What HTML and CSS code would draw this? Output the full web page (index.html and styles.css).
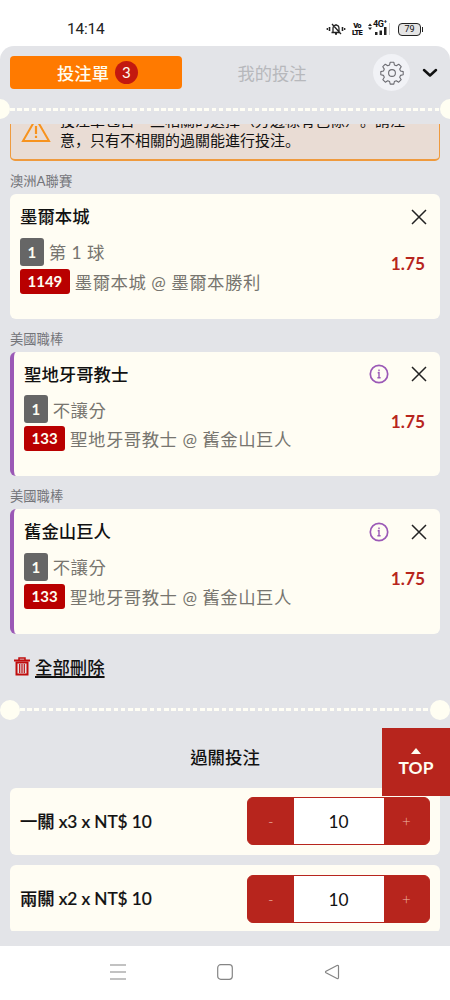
FILE: index.html
```html
<!DOCTYPE html>
<html lang="zh-Hant">
<head>
<meta charset="utf-8">
<meta name="viewport" content="width=device-width, initial-scale=1">
<title>投注單</title>
<link rel="stylesheet" href="styles.css">
</head>
<body>
<div class="phone">
  <div class="status">
    <span class="clock">14:14</span>
    <div class="status-icons">
      <svg class="bell" width="20" height="14" viewBox="0 0 20 14" fill="none" stroke="#222" stroke-width="1.3"><path d="M5.5 10.5h9M7 10V6.5a3 3.3 0 0 1 6 0V10M10 2v1M9 12h2M6 2l9 10"/><path d="M3.5 5v4M16.5 5v4" stroke-width="1.6"/><path d="M1.3 6v2M18.7 6v2"/></svg>
      <span class="volte"><span>Vo</span><span>LTE</span></span>
      <span class="signal">
        <span class="net">4G<sup>+</sup></span>
        <svg width="24" height="14" viewBox="0 0 24 14"><path d="M1 4l2-2.6L5 4zM1 5.4h4L3 8z" fill="#222"/><path d="M8 10h2.500v3H8zM12.500 8.500H15V13h-2.500zM17 5h2.500v8H17z" fill="#222"/><path d="M22 1h1v12h-1z" fill="#ccc"/></svg>
      </span>
      <span class="battery">79</span>
    </div>
  </div>

  <div class="sheet">
    <div class="tabs">
      <div class="tab active">投注單<span class="count">3</span></div>
      <div class="tab">我的投注</div>
      <div class="gear">
        <svg width="24" height="24" viewBox="0 0 24 24" fill="none" stroke="#6c6c72" stroke-width="1.1" stroke-linejoin="round"><path d="M10.200 1.200h3.600l.6 2.700 1.900.8 2.400-1.500 2.500 2.500-1.500 2.400.8 1.900 2.700.6v3.200l-2.700.6-.8 1.900 1.500 2.400-2.500 2.500-2.400-1.500-1.900.8-.6 2.600h-3.600l-.6-2.600-1.900-.8-2.400 1.500-2.500-2.500 1.500-2.400-.8-1.900-2.700-.6v-3.200l2.700-.6.8-1.900-1.500-2.400 2.500-2.500 2.400 1.500 1.900-.8z"/><circle cx="12" cy="12" r="3.400"/></svg>
      </div>
      <svg class="chevron" width="16" height="10" viewBox="0 0 16 10" fill="none" stroke="#111" stroke-width="2.500" stroke-linecap="round" stroke-linejoin="round"><path d="M2 2l6 5.500L14 2"/></svg>
    </div>
    <div class="perforation edge"><i></i><b></b><i></i></div>

    <div class="content">
      <div class="notice-clip">
        <div class="notice">
          <svg width="30" height="27" viewBox="0 0 30 27" fill="none" stroke="#f7931e" stroke-width="2"><path d="M15 2.500L28 25H2z"/><path d="M15 10v8M15 19.800v2.200" stroke-width="2.200"/></svg>
          <p lang="zh-Hans">投注單包含一些相關的選擇（旁邊標有色條）。請注意，只有不相關的過關能進行投注。</p>
        </div>
      </div>

      <div class="league">澳洲A聯賽</div>
      <div class="card">
        <div class="head"><h3>墨爾本城</h3>
          <svg class="close" width="16" height="16" viewBox="0 0 16 16"><path d="M1 1l14 14M15 1L1 15"/></svg></div>
        <div class="body">
          <div class="lines">
            <div class="line"><span class="tag gray">1</span><span>第 1 球</span></div>
            <div class="line"><span class="tag red">1149</span><span>墨爾本城 @ 墨爾本勝利</span></div>
          </div>
          <span class="odds">1.75</span>
        </div>
      </div>

      <div class="league">美國職棒</div>
      <div class="card linked">
        <div class="head"><h3>聖地牙哥教士</h3>
          <svg class="info" width="20" height="20" viewBox="0 0 20 20"><circle cx="10" cy="10" r="8.700"/><path d="M8.700 8.800H10v4.600M8.400 13.700h3.200M10 5.500v1.800" stroke-width="1.400"/></svg>
          <svg class="close" width="16" height="16" viewBox="0 0 16 16"><path d="M1 1l14 14M15 1L1 15"/></svg></div>
        <div class="body">
          <div class="lines">
            <div class="line"><span class="tag gray">1</span><span>不讓分</span></div>
            <div class="line"><span class="tag red">133</span><span>聖地牙哥教士 @ 舊金山巨人</span></div>
          </div>
          <span class="odds">1.75</span>
        </div>
      </div>

      <div class="league">美國職棒</div>
      <div class="card linked">
        <div class="head"><h3>舊金山巨人</h3>
          <svg class="info" width="20" height="20" viewBox="0 0 20 20"><circle cx="10" cy="10" r="8.700"/><path d="M8.700 8.800H10v4.600M8.400 13.700h3.200M10 5.500v1.800" stroke-width="1.400"/></svg>
          <svg class="close" width="16" height="16" viewBox="0 0 16 16"><path d="M1 1l14 14M15 1L1 15"/></svg></div>
        <div class="body">
          <div class="lines">
            <div class="line"><span class="tag gray">1</span><span>不讓分</span></div>
            <div class="line"><span class="tag red">133</span><span>聖地牙哥教士 @ 舊金山巨人</span></div>
          </div>
          <span class="odds">1.75</span>
        </div>
      </div>

      <div class="clear-all">
        <svg width="16" height="19" viewBox="0 0 16 19" fill="none" stroke="#c00d0d"><path d="M0 3.500h16" stroke-width="2"/><path d="M5 3V1h6v2" stroke-width="1.500"/><path d="M2.500 5.500v12h11v-12z" stroke-width="2"/><path d="M5.700 7v9M8 7v9M10.300 7v9" stroke-width="1.200"/></svg>
        <span>全部刪除</span>
      </div>

      <div class="perforation inset"><i></i><b></b><i></i></div>

      <h2>過關投注</h2>
      <div class="stake">
        <span>一關 x3 x NT$ 10</span>
        <div class="stepper"><span>-</span><strong>10</strong><span>+</span></div>
      </div>
      <div class="stake">
        <span>兩關 x2 x NT$ 10</span>
        <div class="stepper"><span>-</span><strong>10</strong><span>+</span></div>
      </div>
    </div>
    <div class="top-button">
      <svg width="10" height="6" viewBox="0 0 10 6"><path d="M5 0l5 6H0z" fill="#fffef2"/></svg>
      <span>TOP</span>
    </div>
  </div>

  <div class="nav">
    <svg width="16" height="16" viewBox="0 0 16 16"><path d="M0 1h16M0 8h16M0 15h16"/></svg>
    <svg width="16" height="16" viewBox="0 0 16 16"><rect x=".7" y=".7" width="14.600" height="14.600" rx="3"/></svg>
    <svg width="16" height="16" viewBox="0 0 16 16"><path d="M13 1.500L2 7.200q-1 .8 0 1.600L13 14.500q1.500.4 1.500-1V2.500q0-1.500-1.500-1z"/></svg>
  </div>
</div>
</body>
</html>
```
FILE: styles.css
```css
* { box-sizing: border-box; }
body {
  margin: 0;
  background: #fff;
  color: #111;
  font-family: Lato, "Noto Sans CJK TC", sans-serif;
}
h2, h3, p { margin: 0; }
svg { display: block; flex: none; }

.phone {
  display: flex;
  flex-direction: column;
  width: 450px;
  height: 1000px;
  overflow: hidden;
}

/* status bar */
.status {
  display: flex;
  justify-content: space-between;
  height: 46px;
  padding: 18px 29px 0 67px;
}
.clock {
  font: 15.5px/22px Roboto, sans-serif;
  letter-spacing: -.2px;
  color: #222;
}
.status-icons {
  display: flex;
  align-items: center;
  height: 22px;
  font-family: Roboto, sans-serif;
}
.bell { margin-right: 6px; }
.volte {
  display: flex;
  flex-direction: column;
  align-items: center;
  width: 10px;
  font-size: 7.5px;
  font-weight: 900;
  line-height: 7px;
  letter-spacing: -.7px;
}
.signal { position: relative; margin: 0 7px 0 5px; }
.net {
  position: absolute;
  left: 6px;
  top: -2px;
  font-size: 9px;
  font-weight: 700;
  line-height: 9px;
  letter-spacing: -.3px;
}
.net sup { font-size: 6px; line-height: 0; }
.battery {
  position: relative;
  width: 23px;
  height: 13px;
  border: 1.5px solid #222;
  border-radius: 4px;
  background: #e4e4e4;
  font-size: 9px;
  line-height: 11px;
  text-align: center;
}
.battery::after {
  content: "";
  position: absolute;
  right: -3px;
  top: 3px;
  width: 1.5px;
  height: 5px;
  background: #222;
}

/* slip sheet */
.sheet {
  position: relative;
  height: 900px;
  border-radius: 14px 14px 0 0;
  background: #e3e4e8;
  overflow: hidden;
}
.tabs {
  display: flex;
  align-items: center;
  height: 53px;
  padding: 0 11px 0 10px;
}
.tab {
  display: flex;
  align-items: center;
  justify-content: center;
  width: 180px;
  height: 33px;
  padding-bottom: 1px;
  font-size: 17.3px;
  color: #b7b8bc;
}
.tab.active {
  width: 172px;
  padding-left: 3px;
  border-radius: 4px;
  background: #ff7a00;
  color: #fffdf0;
  font-weight: 500;
}
.count {
  width: 23px;
  height: 23px;
  margin-left: 6px;
  border-radius: 50%;
  background: #c3190f;
  font: 15px/23px Lato, sans-serif;
  text-align: center;
}
.gear {
  display: flex;
  align-items: center;
  justify-content: center;
  width: 37px;
  height: 37px;
  margin: 0 12px 0 11px;
  border-radius: 50%;
  background: #f1f2f6;
}
.perforation {
  display: flex;
  align-items: center;
  justify-content: space-between;
  height: 20px;
}
.perforation i {
  width: 20px;
  height: 20px;
  border-radius: 50%;
  background: #fffef2;
}
.perforation b {
  flex: 1;
  height: 3px;
  background: repeating-linear-gradient(90deg, #fffef5 0 4.6px, transparent 4.6px 7.2px);
}
.edge { margin: 0 -10px; }

.content {
  height: 807px;
  margin-top: 5px;
  overflow: hidden;
}
.notice-clip {
  display: flex;
  align-items: flex-end;
  height: 37px;
  padding: 0 10px;
  overflow: hidden;
}
.notice {
  display: flex;
  flex: none;
  width: 430px;
  height: 60px;
  padding: 8px 10px 0 10px;
  border: 1.5px solid #ef9a3d;
  border-bottom-width: 2px;
  border-radius: 5px;
  background: #e9dcd4;
}
.notice p {
  width: 352px;
  margin-left: 9px;
  font-family: "Noto Sans CJK SC", sans-serif;
  font-size: 15px;
  line-height: 20px;
  text-spacing-trim: space-all;
}
.notice svg { margin-top: 6px; }
.league {
  height: 33px;
  padding: 10px 10px 0;
  font-size: 13.3px;
  line-height: 20px;
  color: #74757a;
}
.card {
  height: 124.5px;
  margin: 0 10px;
  padding: 10px 13px 0 10px;
  border-radius: 6px;
  background: #fffdf3;
}
.linked { border-left: 4px solid #9b59b6; }
.head {
  display: flex;
  align-items: center;
  height: 25px;
}
.head h3 {
  flex: 1;
  font-size: 17.4px;
  line-height: 25px;
  font-weight: 500;
}
.close {
  margin-left: 22px;
  fill: none;
  stroke: #222;
  stroke-width: 1.5;
}
.info {
  fill: none;
  stroke: #9b59b6;
  stroke-width: 1.7;
}
.body {
  display: flex;
  align-items: center;
  justify-content: space-between;
  height: 69px;
  padding-right: 2px;
}
.lines { padding-top: 6px; }
.line {
  display: flex;
  align-items: center;
  height: 29.5px;
  font-size: 17.4px;
  letter-spacing: .5px;
  color: #77756f;
}
.tag {
  margin-right: 5px;
  padding: 0 7.5px;
  border-radius: 3px;
  color: #fffef2;
  font-size: 15px;
  letter-spacing: 0;
  font-weight: 700;
  line-height: 25px;
}
.gray { line-height: 28px; background: #666; }
.red { background: #b90000; }
.odds {
  font-size: 17.3px;
  font-weight: 700;
  color: #b7251d;
}
.clear-all {
  display: flex;
  align-items: center;
  height: 66px;
  padding: 0 0 1px 14px;
  font-size: 17.4px;
  font-weight: 500;
}
.clear-all span {
  margin-left: 5px;
  text-decoration: underline;
  text-underline-offset: 2px;
  text-decoration-thickness: 1.5px;
}
h2 {
  height: 68px;
  font-size: 17.4px;
  font-weight: 500;
  line-height: 75px;
  text-align: center;
}
.stake {
  display: flex;
  align-items: center;
  justify-content: space-between;
  height: 67.5px;
  margin: 0 10px 10px;
  padding: 0 10px;
  border-radius: 6px;
  background: #fffdf3;
  font-size: 17.3px;
  font-weight: 500;
}
.stake > span {
  padding-bottom: 2px;
  letter-spacing: -.1px;
  -webkit-text-stroke: .2px #111;
}
.stepper {
  display: flex;
  width: 183px;
  height: 48px;
  border: 1px solid #b7251d;
  border-radius: 6px;
  background: #b7251d;
  line-height: 47px;
  text-align: center;
}
.stepper span {
  flex: 1;
  color: #efb9a9;
  font-size: 15px;
  font-weight: 300;
}
.stepper strong {
  width: 90px;
  background: #fff;
  font-size: 17.3px;
  font-weight: 400;
}
.top-button {
  position: absolute;
  right: 0;
  top: 682px;
  display: flex;
  flex-direction: column;
  align-items: center;
  width: 68px;
  height: 68px;
  padding-top: 20px;
  background: #b7251d;
  color: #fffef2;
  font-size: 17.4px;
  font-weight: 700;
  line-height: 28px;
}

/* system navigation */
.nav {
  display: flex;
  justify-content: space-between;
  align-items: center;
  height: 54px;
  padding: 0 110px 2px;
}
.nav svg {
  fill: none;
  stroke: #858585;
  stroke-width: 1.2;
}
```
